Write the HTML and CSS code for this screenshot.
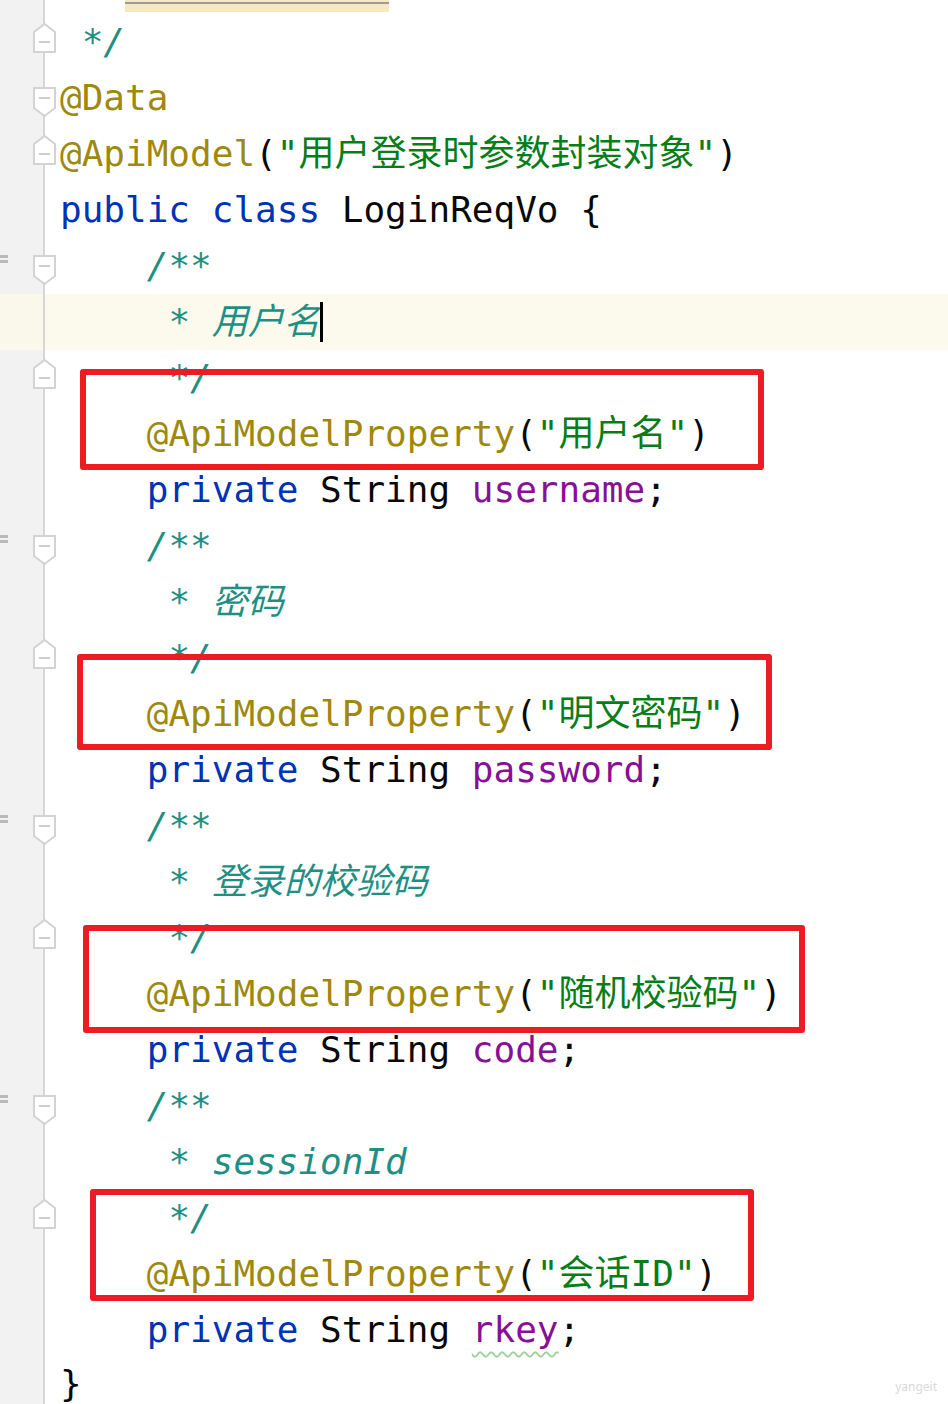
FILE: index.html
```html
<!DOCTYPE html>
<html lang="zh-CN">
<head>
    <meta charset="UTF-8">
    <meta name="viewport" content="width=device-width, initial-scale=1.0">
    <title>LoginReqVo.java</title>
    <link rel="stylesheet" href="styles.css">
</head>
<body>
    <div class="editor">
        <div class="line partial">
            <div class="gutter"><span class="mark"></span></div>
            <div class="code"><div class="link-hl"></div></div>
        </div>

        <div class="line">
            <div class="gutter"><span class="mark"></span>
                <svg class="fold" width="24" height="30" viewBox="0 0 24 30"><path d="M1 9 L11.5 1 L22 9 V29 H1 Z"/><line x1="6" y1="19" x2="17" y2="19"/></svg>
            </div>
            <div class="code"> <span class="doc">*/</span></div>
        </div>
        <div class="line">
            <div class="gutter"><span class="mark"></span>
                <svg class="fold down" width="24" height="30" viewBox="0 0 24 30"><path d="M1 1 H22 V21 L11.5 29 L1 21 Z"/><line x1="6" y1="11" x2="17" y2="11"/></svg>
            </div>
            <div class="code"><span class="ann">@Data</span></div>
        </div>
        <div class="line">
            <div class="gutter"><span class="mark"></span>
                <svg class="fold" width="24" height="30" viewBox="0 0 24 30"><path d="M1 9 L11.5 1 L22 9 V29 H1 Z"/><line x1="6" y1="19" x2="17" y2="19"/></svg>
            </div>
            <div class="code"><span class="ann">@ApiModel</span>(<span class="str">"用户登录时参数封装对象"</span>)</div>
        </div>
        <div class="line">
            <div class="gutter"><span class="mark"></span></div>
            <div class="code"><span class="kw">public class</span> LoginReqVo {</div>
        </div>

        <!-- username -->
        <div class="line">
            <div class="gutter"><span class="mark sep"></span>
                <svg class="fold down" width="24" height="30" viewBox="0 0 24 30"><path d="M1 1 H22 V21 L11.5 29 L1 21 Z"/><line x1="6" y1="11" x2="17" y2="11"/></svg>
            </div>
            <div class="code">    <span class="doc">/**</span></div>
        </div>
        <div class="line current">
            <div class="gutter"><span class="mark"></span></div>
            <div class="code">     <span class="doc">* 用户名</span><span class="caret"></span></div>
        </div>
        <div class="line">
            <div class="gutter"><span class="mark"></span>
                <svg class="fold" width="24" height="30" viewBox="0 0 24 30"><path d="M1 9 L11.5 1 L22 9 V29 H1 Z"/><line x1="6" y1="19" x2="17" y2="19"/></svg>
            </div>
            <div class="code">     <span class="doc">*/</span></div>
        </div>
        <div class="line">
            <div class="gutter"><span class="mark"></span></div>
            <div class="code">    <span class="ann">@ApiModelProperty</span>(<span class="str">"用户名"</span>)</div>
        </div>
        <div class="line">
            <div class="gutter"><span class="mark"></span></div>
            <div class="code">    <span class="kw">private</span> String <span class="field">username</span>;</div>
        </div>

        <!-- password -->
        <div class="line">
            <div class="gutter"><span class="mark sep"></span>
                <svg class="fold down" width="24" height="30" viewBox="0 0 24 30"><path d="M1 1 H22 V21 L11.5 29 L1 21 Z"/><line x1="6" y1="11" x2="17" y2="11"/></svg>
            </div>
            <div class="code">    <span class="doc">/**</span></div>
        </div>
        <div class="line">
            <div class="gutter"><span class="mark"></span></div>
            <div class="code">     <span class="doc">* 密码</span></div>
        </div>
        <div class="line">
            <div class="gutter"><span class="mark"></span>
                <svg class="fold" width="24" height="30" viewBox="0 0 24 30"><path d="M1 9 L11.5 1 L22 9 V29 H1 Z"/><line x1="6" y1="19" x2="17" y2="19"/></svg>
            </div>
            <div class="code">     <span class="doc">*/</span></div>
        </div>
        <div class="line">
            <div class="gutter"><span class="mark"></span></div>
            <div class="code">    <span class="ann">@ApiModelProperty</span>(<span class="str">"明文密码"</span>)</div>
        </div>
        <div class="line">
            <div class="gutter"><span class="mark"></span></div>
            <div class="code">    <span class="kw">private</span> String <span class="field">password</span>;</div>
        </div>

        <!-- code -->
        <div class="line">
            <div class="gutter"><span class="mark sep"></span>
                <svg class="fold down" width="24" height="30" viewBox="0 0 24 30"><path d="M1 1 H22 V21 L11.5 29 L1 21 Z"/><line x1="6" y1="11" x2="17" y2="11"/></svg>
            </div>
            <div class="code">    <span class="doc">/**</span></div>
        </div>
        <div class="line">
            <div class="gutter"><span class="mark"></span></div>
            <div class="code">     <span class="doc">* 登录的校验码</span></div>
        </div>
        <div class="line">
            <div class="gutter"><span class="mark"></span>
                <svg class="fold" width="24" height="30" viewBox="0 0 24 30"><path d="M1 9 L11.5 1 L22 9 V29 H1 Z"/><line x1="6" y1="19" x2="17" y2="19"/></svg>
            </div>
            <div class="code">     <span class="doc">*/</span></div>
        </div>
        <div class="line">
            <div class="gutter"><span class="mark"></span></div>
            <div class="code">    <span class="ann">@ApiModelProperty</span>(<span class="str">"随机校验码"</span>)</div>
        </div>
        <div class="line">
            <div class="gutter"><span class="mark"></span></div>
            <div class="code">    <span class="kw">private</span> String <span class="field">code</span>;</div>
        </div>

        <!-- rkey -->
        <div class="line">
            <div class="gutter"><span class="mark sep"></span>
                <svg class="fold down" width="24" height="30" viewBox="0 0 24 30"><path d="M1 1 H22 V21 L11.5 29 L1 21 Z"/><line x1="6" y1="11" x2="17" y2="11"/></svg>
            </div>
            <div class="code">    <span class="doc">/**</span></div>
        </div>
        <div class="line">
            <div class="gutter"><span class="mark"></span></div>
            <div class="code">     <span class="doc">* sessionId</span></div>
        </div>
        <div class="line">
            <div class="gutter"><span class="mark"></span>
                <svg class="fold" width="24" height="30" viewBox="0 0 24 30"><path d="M1 9 L11.5 1 L22 9 V29 H1 Z"/><line x1="6" y1="19" x2="17" y2="19"/></svg>
            </div>
            <div class="code">     <span class="doc">*/</span></div>
        </div>
        <div class="line">
            <div class="gutter"><span class="mark"></span></div>
            <div class="code">    <span class="ann">@ApiModelProperty</span>(<span class="str">"会话ID"</span>)</div>
        </div>
        <div class="line">
            <div class="gutter"><span class="mark"></span></div>
            <div class="code">    <span class="kw">private</span> String <span class="field typo">rkey</span>;</div>
        </div>
        <div class="line last">
            <div class="gutter"><span class="mark"></span></div>
            <div class="code">}</div>
        </div>

        <!-- red boxes drawn over the screenshot -->
        <div class="box box1"></div>
        <div class="box box2"></div>
        <div class="box box3"></div>
        <div class="box box4"></div>

        <div class="watermark">yangeit</div>
    </div>
</body>
</html>
```

FILE: styles.css
```css
html, body {
    margin: 0;
    padding: 0;
    background: #ffffff;
}
.editor {
    position: relative;
    height: 1404px;
    overflow: hidden;
    font-family: "DejaVu Sans Mono", "Noto Sans CJK SC", monospace;
    font-size: 36px;
    color: #080808;
}
.line {
    display: flex;
    height: 56px;
}
.line.partial {
    height: 14px;
}
.line.last {
    height: 46px;
}
.line.current {
    background: #fcfaed;
}
.gutter {
    flex: 0 0 43px;
    width: 43px;
    min-width: 0;
    display: flex;
    align-items: center;
    background: #f2f2f2;
    border-right: 2px solid #d6d6d6;
}
.line.current .gutter {
    background: #faf8eb;
}
.mark {
    flex: 0 0 8px;
    height: 8px;
    margin-right: 25px;
    margin-top: -14px;
}
.mark.sep {
    border-top: 3px solid #b9b9b9;
    border-bottom: 3px solid #b9b9b9;
    height: 2px;
}
.fold {
    flex: 0 0 24px;
    position: relative;
    z-index: 1;
    margin-top: -8px;
}
.fold.down {
    margin-top: 8px;
}
.fold path {
    fill: #ffffff;
    stroke: #d3d3d3;
    stroke-width: 2;
}
.fold line {
    stroke: #cfcfcf;
    stroke-width: 2;
}
.code {
    flex: 1;
    padding-left: 15px;
    line-height: 56px;
    white-space: pre;
}
.line.last .code {
    line-height: 52px;
}
.link-hl {
    margin-left: 65px;
    width: 264px;
    height: 12px;
    background: #f6e9c2;
    overflow: hidden;
}
.link-hl::before {
    content: "";
    display: block;
    height: 2px;
    margin-top: 2px;
    background: #9b9b9b;
}
.kw { color: #0033b3; }
.ann { color: #9e880d; }
.str { color: #067d17; }
.field { color: #871094; }
.doc {
    color: #1f8f84;
    font-style: italic;
}
.typo {
    text-decoration: underline wavy #9fd19f;
    text-decoration-thickness: 1.5px;
    text-underline-offset: 9px;
}
.caret {
    display: inline-block;
    width: 3px;
    height: 40px;
    background: #000000;
    vertical-align: middle;
    margin-top: -4px;
}
.box {
    position: absolute;
    border: 6px solid #ed1c24;
    border-radius: 3px;
    box-sizing: border-box;
}
.box1 { left: 80px; top: 369px; width: 684px; height: 101px; }
.box2 { left: 77px; top: 654px; width: 695px; height: 96px; }
.box3 { left: 83px; top: 925px; width: 722px; height: 108px; }
.box4 { left: 90px; top: 1189px; width: 664px; height: 112px; }
.watermark {
    position: absolute;
    right: 11px;
    bottom: 9px;
    font-family: "Noto Sans", sans-serif;
    font-size: 12px;
    color: #d9d9d9;
}
```
